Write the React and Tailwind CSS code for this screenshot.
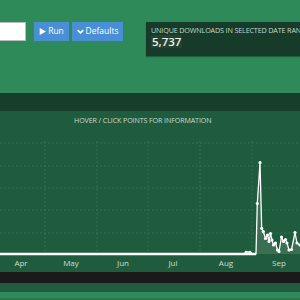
import React from "react";

const pts = [
  [0, 254], [244, 254], [246, 252], [250, 252], [253, 254], [256, 254],
  [257.3, 203.5], [260, 162.7], [261.7, 228.3], [263.3, 231.5], [265.5, 238.5],
  [267.5, 235], [269, 241.5], [270.5, 233.5], [272, 240], [273.5, 245],
  [275.5, 243], [277.5, 250], [279, 251.5], [281.5, 237], [283.5, 241.5],
  [285.5, 239.5], [287, 243], [289, 250], [291.5, 249.5], [295, 232.5],
  [297, 243], [300, 245],
];

function Chart() {
  const top = 111;
  const p = pts.map(([x, y]) => [x, y - top]);
  const line = p.map(([x, y], i) => `${i ? "L" : "M"}${x} ${y}`).join(" ");
  const area = `${line} L300 143 L0 143 Z`;
  const hGrid = [143, 166, 188, 210, 233].map((y) => y - top);
  const vGrid = [45, 97, 148, 200, 252];
  const months = [
    ["Apr", 21], ["May", 71], ["Jun", 123], ["Jul", 173], ["Aug", 226], ["Sep", 279],
  ];
  return (
    <svg width="300" height="161" className="block">
      {hGrid.map((y) => (
        <line key={y} x1="0" x2="300" y1={y} y2={y} stroke="#2f7550" strokeWidth="1" strokeDasharray="2 2" />
      ))}
      {vGrid.map((x) => (
        <line key={x} x1={x} x2={x} y1="30" y2="143" stroke="#2f7550" strokeWidth="1" strokeDasharray="2 2" />
      ))}
      <path d={area} fill="rgba(255,255,255,0.12)" />
      <path d={line} fill="none" stroke="#ffffff" strokeWidth="1.3" strokeLinejoin="round" />
      <line x1="0" x2="256" y1="143" y2="143" stroke="#ffffff" strokeWidth="2.5" />
      {p.slice(6).map(([x, y], i) => (
        <circle key={i} cx={x} cy={y} r="1.6" fill="#ffffff" />
      ))}
      <circle cx="246" cy="141" r="1.3" fill="#ffffff" />
      <circle cx="250" cy="141" r="1.3" fill="#ffffff" />
      {months.map(([m, x]) => (
        <text key={m} x={x} y="154.5" textAnchor="middle" fontSize="8" fill="#cfdcd3" fontFamily="'Open Sans', sans-serif">
          {m}
        </text>
      ))}
    </svg>
  );
}

export default function App() {
  return (
    <div className="w-[300px] h-[300px] overflow-hidden bg-[#2e8a58] font-['Open_Sans',sans-serif] flex flex-col">
      <div className="h-[93px] shrink-0 flex items-start pt-[22px]">
        <div className="w-[26px] h-[19px] bg-white border border-[#bbbbbb] border-l-0 shrink-0" />
        <button className="ml-[8px] w-[35px] h-[18.5px] bg-[#4a8fd3] text-white text-[8.5px] flex items-center justify-center gap-[2px] shrink-0">
          <svg width="7" height="7" viewBox="0 0 10 10"><path d="M1 0 L10 5 L1 10 Z" fill="#ffffff" /></svg>
          <span>Run</span>
        </button>
        <button className="ml-[3px] w-[51px] h-[18.5px] bg-[#4a8fd3] text-white text-[8.5px] flex items-center justify-center gap-[2px] shrink-0">
          <svg width="7" height="7" viewBox="0 0 10 10"><path d="M1 3 L5 7 L9 3" fill="none" stroke="#ffffff" strokeWidth="2.2" /></svg>
          <span>Defaults</span>
        </button>
        <div className="ml-[23px] h-[34px] flex-1 min-w-0 bg-[#163b28] shadow-[0_1px_1px_rgba(0,0,0,0.3)] pl-[5px] pt-[4px] overflow-hidden whitespace-nowrap leading-none">
          <div className="text-[7.2px] leading-[9px] text-[#c8d6cd] tracking-[-0.15px]">UNIQUE DOWNLOADS IN SELECTED DATE RANGE</div>
          <div className="flex">
            <span className="bg-[#24432f] px-[1px] text-[11.5px] leading-[13px] font-semibold text-[#eef3ef]">5,737</span>
          </div>
        </div>
      </div>
      <div className="h-[18px] shrink-0 bg-[#173e2b]" />
      <div className="h-[161px] shrink-0 bg-[#1f5c3d] relative">
        <div className="absolute top-[5px] left-[74px] whitespace-nowrap text-[7.1px] tracking-[-0.1px] text-[#cad8cf] leading-[9px]">
          HOVER / CLICK POINTS FOR INFORMATION
        </div>
        <Chart />
      </div>
      <div className="h-[11px] shrink-0 bg-[#1a1a1a]" />
      <div className="h-[9px] shrink-0 bg-[#205c3d]" />
      <div className="flex-1 bg-[#2e8a58] border-b-2 border-[#287a4d]" />
    </div>
  );
}
